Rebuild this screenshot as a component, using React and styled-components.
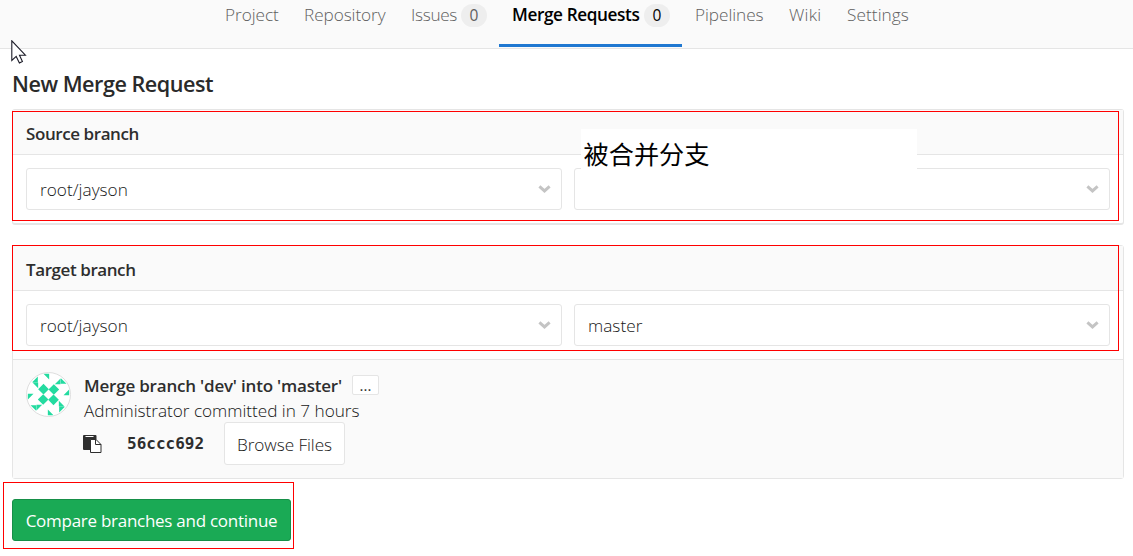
import React from 'react';
import styled, { createGlobalStyle } from 'styled-components';

const GlobalStyle = createGlobalStyle`
  * { box-sizing: border-box; }
  body {
    margin: 0;
    background: #fff;
    color: #161616;
    font-family: 'Open Sans', 'Noto Sans CJK SC', sans-serif;
    font-size: 17.2px;
    font-weight: 300;
    white-space: nowrap;
  }
`;

const Page = styled.div`
  position: relative;
  width: 1133px;
  height: 556px;
  overflow: hidden;
`;

const Nav = styled.nav`
  display: flex;
  height: 49px;
  padding-left: 212px;
  background: #fafafa;
  border-bottom: 1px solid #e5e5e5;
`;

const NavItem = styled.a`
  display: flex;
  align-items: flex-start;
  justify-content: space-between;
  width: ${(p) => p.$width}px;
  height: 47px;
  padding: 0 12px 0 13px;
  line-height: 30px;
  letter-spacing: ${(p) => p.$spacing || 0}px;
  color: ${(p) => (p.$active ? '#000' : '#606060')};
  font-weight: ${(p) => (p.$active ? 600 : 300)};
  border-bottom: ${(p) => (p.$active ? '3px solid #1f78d1' : '0')};
`;

const Badge = styled.span`
  width: 26px;
  height: 23px;
  margin-top: 4px;
  border-radius: 12px;
  background: #eee;
  font-size: 15.5px;
  font-weight: 400;
  letter-spacing: 0;
  line-height: 23px;
  text-align: center;
`;

const Main = styled.main`
  padding: 0 9px 0 12px;
`;

const Title = styled.h3`
  height: 60px;
  margin: 0;
  font-size: 21.6px;
  font-weight: 600;
  line-height: 70px;
  letter-spacing: -0.47px;
  color: #2a2a2a;
`;

const Panel = styled.section`
  margin-bottom: 20px;
  border: 1px solid #e5e5e5;
  border-bottom-width: ${(p) => (p.$heavy ? 2 : 1)}px;
  border-radius: 3px;
`;

const PanelHeader = styled.header`
  height: 45px;
  padding: 2px 13px 0;
  background: #fafafa;
  border-bottom: 1px solid #e5e5e5;
  color: #2e2e2e;
  font-size: 17px;
  font-weight: 600;
  line-height: 44px;
  letter-spacing: -0.42px;
`;

const SelectRow = styled.div`
  display: grid;
  grid-template-columns: 536px 536px;
  gap: 12px;
  padding: 13px;
`;

const Select = styled.div`
  display: flex;
  align-items: center;
  justify-content: space-between;
  height: 42px;
  padding: 0 10px 0 13px;
  border: 1px solid #e5e5e5;
  border-radius: 3px;
  background: #fff;
  letter-spacing: 0.03px;
`;

const Commit = styled.div`
  display: flex;
  gap: 12px;
  height: 119px;
  padding: 12px 13px 0;
  border-top: 1px solid #e5e5e5;
  background: #fafafa;
`;

const CommitBody = styled.div`
  line-height: 25px;
`;

const CommitTitle = styled.div`
  display: flex;
  align-items: center;
  gap: 10px;
  height: 25px;
  color: #2e2e2e;
  font-size: 17px;
  font-weight: 600;
  line-height: 27px;
  letter-spacing: -0.2px;
`;

const CommitSubject = styled.span`
  width: 259px;
  padding: 1px 0 0 1px;
`;

const MoreButton = styled.button`
  width: 27px;
  height: 20px;
  padding: 0;
  border: 1px solid #e5e5e5;
  border-radius: 2px;
  background: #fff;
  color: #2e2e2e;
  font: 400 15px/19px 'Open Sans', sans-serif;
`;

const Committer = styled.div`
  height: 25px;
  padding-left: 1px;
  line-height: 27px;
  letter-spacing: -0.02px;
`;

const CommitActions = styled.div`
  display: flex;
  align-items: center;
  height: 43px;
`;

const Sha = styled.span`
  width: 97px;
  margin-left: 25px;
  color: #2e2e2e;
  font: bold 16px/20px 'DejaVu Sans Mono', monospace;
`;

const BrowseButton = styled.button`
  width: 121px;
  height: 43px;
  padding: 2px 0 0;
  border: 1px solid #e5e5e5;
  border-radius: 3px;
  background: #fff;
  color: inherit;
  font: inherit;
  line-height: 39px;
  letter-spacing: -0.05px;
`;

const SubmitButton = styled.button`
  display: block;
  width: 279px;
  height: 42px;
  padding: 1px 0 0;
  border: 1px solid #168f48;
  border-radius: 3px;
  background: #1aaa55;
  color: #fff;
  font: inherit;
  font-size: 17px;
  font-weight: 400;
  letter-spacing: -0.27px;
`;

const Highlight = styled.div`
  position: absolute;
  left: ${(p) => p.$x}px;
  top: ${(p) => p.$y}px;
  width: ${(p) => p.$w}px;
  height: ${(p) => p.$h}px;
  border: 1px solid #f00;
  pointer-events: none;
`;

const Note = styled.div`
  position: absolute;
  left: 581px;
  top: 129px;
  width: 336px;
  height: 41px;
  padding-left: 2.5px;
  background: #fff;
  color: #000;
  font: 400 25.2px/48px 'Noto Sans CJK SC', sans-serif;
`;

const Pointer = styled.svg`
  position: absolute;
  left: 11px;
  top: 40px;
`;

const Chevron = () => (
  <svg width="13" height="9" viewBox="0 0 13 9">
    <path d="M1.4 1.4 6.5 5.9 11.6 1.4" fill="none" stroke="#c4c4c4" strokeWidth="3" />
  </svg>
);

const quadrant =
  'M0-15 16 1 32-15 16-31Z M-15-62H2V-45Z M19-31 36-48V-31Z M54-32H37V-49Z';

const Avatar = () => (
  <svg width="45" height="45" viewBox="-67.5 -67.5 135 135">
    <defs>
      <clipPath id="face"><circle r="65" /></clipPath>
    </defs>
    <circle r="66" fill="#fff" stroke="#dedede" strokeWidth="3" />
    <g clipPath="url(#face)" fill="#24dba0">
      {[0, 90, 180, 270].map((angle) => (
        <path key={angle} d={quadrant} transform={`rotate(${angle})`} />
      ))}
    </g>
  </svg>
);

const PasteIcon = () => (
  <svg width="19" height="19" viewBox="0 0 19 19">
    <path d="M0 2Q0 1 1 1h11.5q1 0 1 1V6H7v10H1q-1 0-1-1Z" fill="#2e2e2e" />
    <path d="M2.5 2h8v1h-8Z" fill="#fafafa" />
    <path d="M7.5 5.5h5.5l5 5v8H7.5Z" fill="#fff" stroke="#2e2e2e" strokeWidth="1" />
    <path d="M12.5 5.5v5H18" fill="none" stroke="#2e2e2e" strokeWidth="1" />
  </svg>
);

const navItems = [
  { label: 'Project', width: 79, spacing: -0.05 },
  { label: 'Repository', width: 107, spacing: -0.08 },
  { label: 'Issues', width: 101, spacing: -0.32, count: 0 },
  { label: 'Merge Requests', width: 183, spacing: -0.4, count: 0, active: true },
  { label: 'Pipelines', width: 94, spacing: -0.05 },
  { label: 'Wiki', width: 58, spacing: 0.25 },
  { label: 'Settings', width: 88, spacing: 0.08 },
];

export default function App() {
  return (
    <Page>
      <GlobalStyle />
      <Nav>
        {navItems.map((item) => (
          <NavItem key={item.label} $width={item.width} $spacing={item.spacing} $active={item.active}>
            {item.label}
            {item.count !== undefined && <Badge>{item.count}</Badge>}
          </NavItem>
        ))}
      </Nav>
      <Main>
        <Title>New Merge Request</Title>
        <Panel $heavy>
          <PanelHeader>Source branch</PanelHeader>
          <SelectRow>
            <Select>root/jayson<Chevron /></Select>
            <Select><span /><Chevron /></Select>
          </SelectRow>
        </Panel>
        <Panel>
          <PanelHeader>Target branch</PanelHeader>
          <SelectRow>
            <Select>root/jayson<Chevron /></Select>
            <Select>master<Chevron /></Select>
          </SelectRow>
          <Commit>
            <Avatar />
            <CommitBody>
              <CommitTitle>
                <CommitSubject>Merge branch 'dev' into 'master'</CommitSubject>
                <MoreButton>...</MoreButton>
              </CommitTitle>
              <Committer>Administrator committed in 7 hours</Committer>
              <CommitActions>
                <PasteIcon />
                <Sha>56ccc692</Sha>
                <BrowseButton>Browse Files</BrowseButton>
              </CommitActions>
            </CommitBody>
          </Commit>
        </Panel>
        <SubmitButton>Compare branches and continue</SubmitButton>
      </Main>
      <Note>被合并分支</Note>
      <Highlight $x={12} $y={111} $w={1107} $h={110} />
      <Highlight $x={12} $y={245} $w={1107} $h={106} />
      <Highlight $x={3} $y={482} $w={291} $h={67} />
      <Pointer width="16" height="25" viewBox="0 0 16 25">
        <path d="M.8.8V20.5L5.2 16.4 8.4 23 11.4 21.6 8.5 15.2H14.4Z" fill="#fff" stroke="#1c1c28" strokeWidth="1.1" />
      </Pointer>
    </Page>
  );
}
